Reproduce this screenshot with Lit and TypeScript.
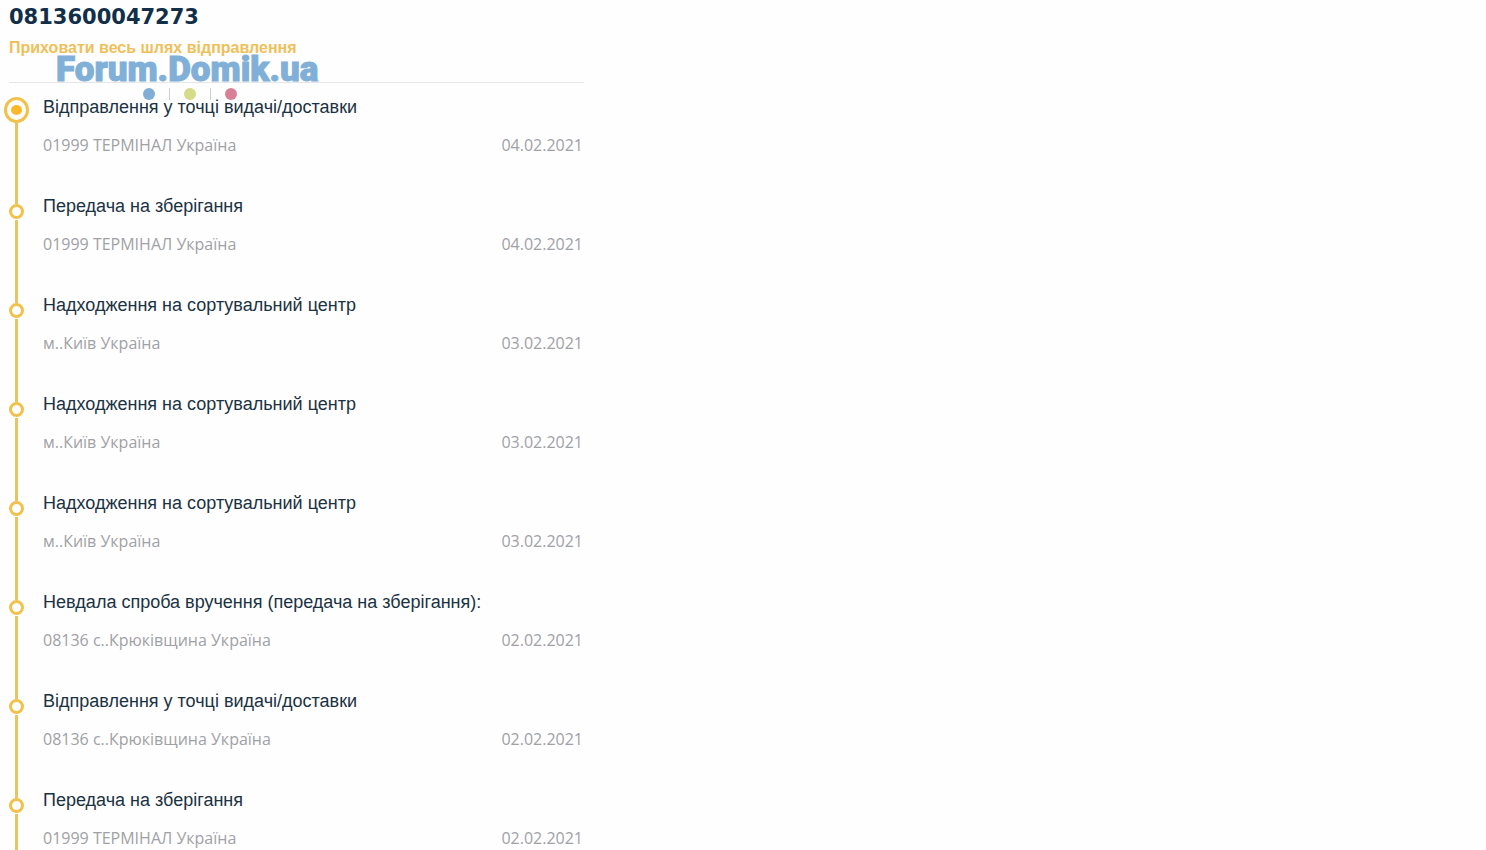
import { LitElement, html, css } from "lit";
import { customElement } from "lit/decorators.js";
import { classMap } from "lit/directives/class-map.js";

interface TrackingEvent {
  title: string;
  place: string;
  date: string;
}

const EVENTS: TrackingEvent[] = [
  { title: "Відправлення у точці видачі/доставки", place: "01999 ТЕРМІНАЛ Україна", date: "04.02.2021" },
  { title: "Передача на зберігання", place: "01999 ТЕРМІНАЛ Україна", date: "04.02.2021" },
  { title: "Надходження на сортувальний центр", place: "м..Київ Україна", date: "03.02.2021" },
  { title: "Надходження на сортувальний центр", place: "м..Київ Україна", date: "03.02.2021" },
  { title: "Надходження на сортувальний центр", place: "м..Київ Україна", date: "03.02.2021" },
  { title: "Невдала спроба вручення (передача на зберігання):", place: "08136 с..Крюківщина Україна", date: "02.02.2021" },
  { title: "Відправлення у точці видачі/доставки", place: "08136 с..Крюківщина Україна", date: "02.02.2021" },
  { title: "Передача на зберігання", place: "01999 ТЕРМІНАЛ Україна", date: "02.02.2021" },
];

@customElement("forum-mark")
export class ForumMark extends LitElement {
  static styles = css`
    :host {
      display: block;
      width: max-content;
      pointer-events: none;
    }
    .name {
      font: 900 35px/32px Roboto, sans-serif;
      -webkit-text-stroke: 1px #80afd7;
      color: #80afd7;
    }
    .dots {
      display: flex;
      align-items: center;
      justify-content: center;
      gap: 14px;
      margin-top: 2px;
      padding-left: 6px;
    }
    .dot {
      width: 12px;
      height: 12px;
      border-radius: 50%;
    }
    .blue { background: #80aed6; }
    .green { background: #d5db87; }
    .pink { background: #d98099; }
    .bar {
      width: 1px;
      height: 12px;
      background: #cfcfcf;
    }
  `;

  render() {
    return html`
      <div class="name">Forum.Domik.ua</div>
      <div class="dots">
        <span class="dot blue"></span><span class="bar"></span>
        <span class="dot green"></span><span class="bar"></span>
        <span class="dot pink"></span>
      </div>
    `;
  }
}

@customElement("app-root")
export class AppRoot extends LitElement {
  static styles = css`
    :host {
      display: block;
      height: 100vh;
      overflow: hidden;
      background: #fefefe;
      font-family: "Liberation Sans", Arial, sans-serif;
    }
    .panel {
      position: relative;
      box-sizing: border-box;
      max-width: 611px;
      padding: 3px 27px 0 4px;
    }
    .head {
      margin-left: 5px;
      padding-bottom: 23px;
      border-bottom: 1px solid #e6e6e8;
    }
    h1 {
      margin: 0;
      font: bold 21px/28px "DejaVu Sans", sans-serif;
      color: #122f4a;
    }
    .toggle {
      display: block;
      margin-top: 6px;
      padding: 0;
      border: 0;
      background: none;
      font: bold 16px/22px "Liberation Sans", Arial, sans-serif;
      color: #efc05a;
      cursor: pointer;
    }
    .mark {
      position: absolute;
      left: 56px;
      top: 54px;
    }
    .events {
      margin: 12px 0 0;
      padding: 0;
      list-style: none;
    }
    .event {
      display: grid;
      grid-template-columns: 25px 1fr;
      column-gap: 14px;
    }
    .track {
      display: flex;
      flex-direction: column;
      align-items: center;
    }
    .lead, .line {
      width: 3px;
      background: #ebc462;
    }
    .lead { height: 10px; }
    .line { flex: 1; }
    .dot {
      box-sizing: border-box;
      width: 15px;
      height: 15px;
      margin-bottom: 1px;
      border: 3px solid #f2c14b;
      border-radius: 50%;
    }
    .current .lead {
      height: 2px;
      background: none;
    }
    .current .dot {
      display: grid;
      place-items: center;
      width: 25px;
      height: 26px;
      margin-bottom: 0;
    }
    .current .dot::after {
      content: "";
      width: 11px;
      height: 10px;
      border-radius: 50%;
      background: #fbb929;
    }
    .body { padding-bottom: 37px; }
    .title {
      margin: 0;
      font-size: 18px;
      line-height: 24px;
      font-weight: normal;
      color: #1b3243;
    }
    .meta {
      display: flex;
      justify-content: space-between;
      margin-top: 14px;
      padding-right: 1px;
      font: 16px/24px "Open Sans", sans-serif;
      color: #a0a1a5;
    }
  `;

  render() {
    return html`
      <main class="panel">
        <header class="head">
          <h1>0813600047273</h1>
          <button class="toggle" type="button">Приховати весь шлях відправлення</button>
        </header>
        <ol class="events">
          ${EVENTS.map(
            (e, i) => html`
              <li class=${classMap({ event: true, current: i === 0 })}>
                <div class="track">
                  <span class="lead"></span><span class="dot"></span><span class="line"></span>
                </div>
                <div class="body">
                  <h2 class="title">${e.title}</h2>
                  <div class="meta"><span>${e.place}</span><time>${e.date}</time></div>
                </div>
              </li>
            `
          )}
        </ol>
        <forum-mark class="mark"></forum-mark>
      </main>
    `;
  }
}
